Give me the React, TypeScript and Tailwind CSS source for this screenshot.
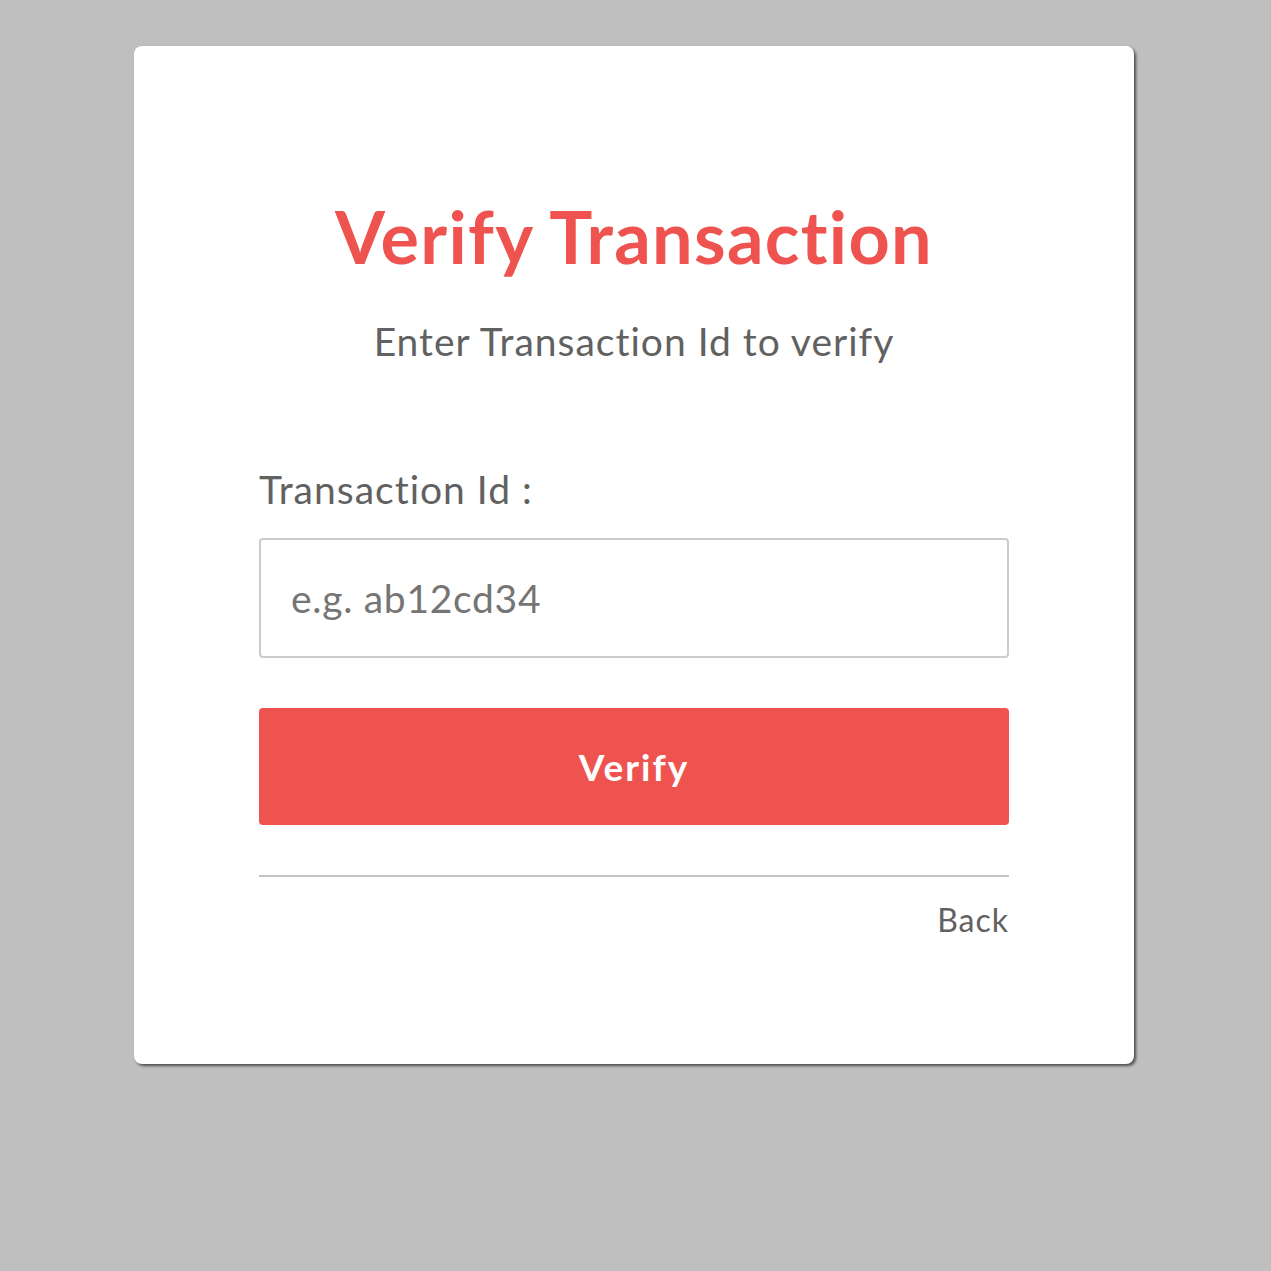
export default function App() {
  return (
    <div className="min-h-[1271px] w-full bg-[#bfbfbf] pt-[46px] font-['Lato','Open_Sans',sans-serif]">
      <div className="ml-[134px] w-[1000px] rounded-lg bg-white px-[125px] pt-[150px] pb-[124px] shadow-[2px_2px_3px_rgba(0,0,0,0.6)]">
        <h1 className="text-center text-[72px] font-bold leading-[80px] tracking-[1.3px] text-[#ef5350]">Verify Transaction</h1>
        <p className="mt-[41px] text-center text-[39px] leading-[48px] tracking-[1px] text-[#616161]">Enter Transaction Id to verify</p>

        <label className="mt-[100px] block text-[39px] leading-[48px] tracking-[1px] text-[#616161]">Transaction Id :</label>
        <input
          type="text"
          placeholder="e.g. ab12cd34"
          className="mt-[25px] block h-[120px] w-full rounded border-2 border-[#cccccc] px-[30px] text-[39px] tracking-[0.7px] text-[#616161] outline-none placeholder:text-[#757575]"
        />

        <button className="mt-[50px] block h-[117px] w-full rounded bg-[#ef5350] text-[37px] font-bold tracking-[2px] text-white">Verify</button>

        <hr className="mt-[50px] border-t-2 border-[#c4c4c4]" />
        <div className="mt-[23px] text-right text-[32px] leading-[40px] tracking-[1px] text-[#616161]">Back</div>
      </div>
    </div>
  )
}
